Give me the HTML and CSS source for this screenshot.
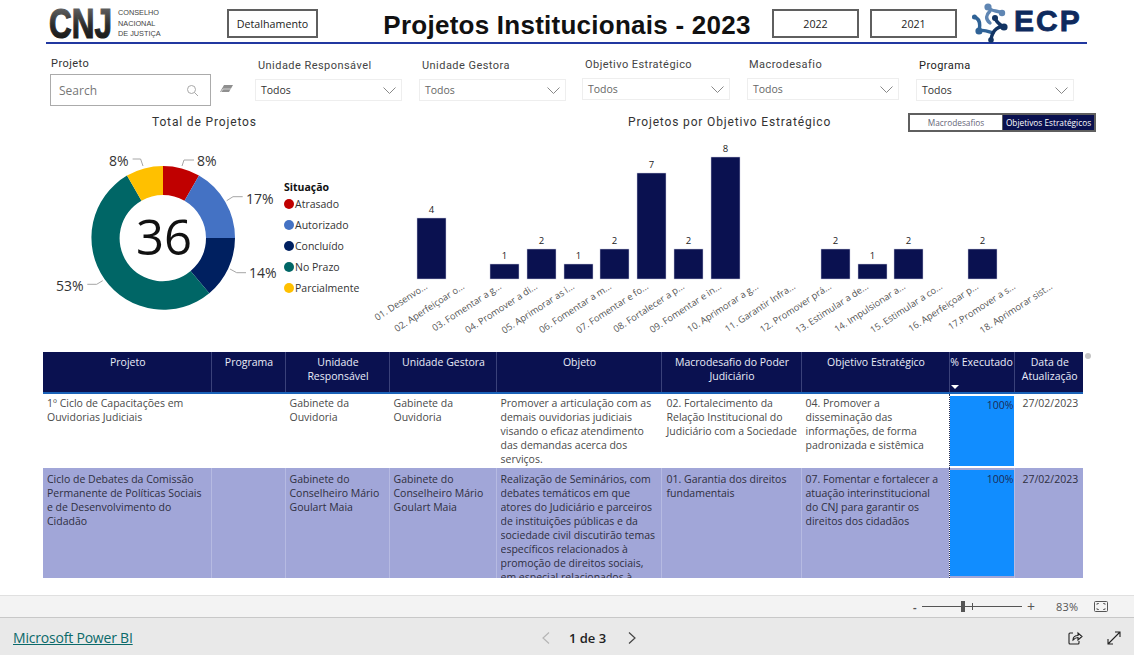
FILE: index.html
```html
<!DOCTYPE html>
<html lang="pt-BR">
<head>
<meta charset="utf-8">
<title>Projetos Institucionais - 2023</title>
<link rel="stylesheet" href="styles.css">
</head>
<body>
<main class="report">
  <header class="top">
    <div class="cnj">
      <svg class="cnj-mark" width="66" height="42" viewBox="0 -7 66 42">
        <defs><linearGradient id="cnjg" x1="0" y1="0" x2="0" y2="1"><stop offset="0" stop-color="#7a7a7a"/><stop offset="0.55" stop-color="#2a2a2a"/><stop offset="1" stop-color="#111"/></linearGradient></defs>
        <text transform="translate(1 31) scale(.75 1)" class="cnj-letters" fill="url(#cnjg)" stroke="url(#cnjg)">CNJ</text>
      </svg>
      <div class="cnj-name">CONSELHO<br>NACIONAL<br>DE JUSTIÇA</div>
    </div>
    <button class="btn btn-detail">Detalhamento</button>
    <h1 class="title">Projetos Institucionais - 2023</h1>
    <button class="btn btn-year">2022</button>
    <button class="btn btn-year">2021</button>
    <div class="ecp">
      <svg width="38" height="42" viewBox="0 0 38 42">
        <g fill="none" stroke-linecap="round">
          <path d="M16 5 C19 10 25 8 30 11 M18 9 C14 13 13 17 18 21" stroke="#5f86b3" stroke-width="3.4"/>
          <path d="M2 15 C6 16 9 20 7 29 M7 29 C11 27 15 29 21 31" stroke="#2f6296" stroke-width="3.4"/>
          <path d="M23 16 C25 21 28 23 32 25 M32 25 C27 24 21 27 19 37" stroke="#123463" stroke-width="3.4"/>
        </g>
        <circle cx="16" cy="5" r="3.6" fill="#5f86b3"/><circle cx="30" cy="11" r="3.2" fill="#5f86b3"/>
        <circle cx="2.500" cy="15" r="2.500" fill="#2f6296"/><circle cx="7" cy="29" r="3.6" fill="#2f6296"/>
        <circle cx="23" cy="16" r="3" fill="#123463"/><circle cx="32" cy="25" r="3.6" fill="#123463"/><circle cx="19" cy="38" r="2.800" fill="#123463"/>
      </svg>
      <span class="ecp-name">ECP</span>
    </div>
  </header>

  <section class="filters">
    <div class="filter filter-search">
      <label class="filter-label">Projeto</label>
      <div class="search">
        <span>Search</span>
        <svg width="13" height="13" viewBox="0 0 13 13"><circle cx="5.5" cy="5.5" r="4" fill="none" stroke="#a8a8a8"/><path d="M8.5 8.5 L12 12" stroke="#a8a8a8"/></svg>
      </div>
    </div>
    <svg class="eraser" width="13" height="9" viewBox="0 0 13 9"><path d="M4 0 H13 L9 7 H0 Z" fill="#8f8f8f"/><path d="M1 7 L3 4 H11" stroke="#fff" stroke-width=".6" fill="none"/></svg>
    <div class="filter f-resp">
      <label class="filter-label">Unidade Responsável</label>
      <div class="select"><span>Todos</span><svg width="13" height="7" viewBox="0 0 13 7"><path d="M.5 .5 L6.5 6.5 L12.5 .5" fill="none" stroke="#888"/></svg></div>
    </div>
    <div class="filter f-gest">
      <label class="filter-label">Unidade Gestora</label>
      <div class="select dim"><span>Todos</span><svg width="13" height="7" viewBox="0 0 13 7"><path d="M.5 .5 L6.5 6.5 L12.5 .5" fill="none" stroke="#888"/></svg></div>
    </div>
    <div class="filter f-obj">
      <label class="filter-label">Objetivo Estratégico</label>
      <div class="select dim"><span>Todos</span><svg width="13" height="7" viewBox="0 0 13 7"><path d="M.5 .5 L6.5 6.5 L12.5 .5" fill="none" stroke="#888"/></svg></div>
    </div>
    <div class="filter f-macro">
      <label class="filter-label">Macrodesafio</label>
      <div class="select dim"><span>Todos</span><svg width="13" height="7" viewBox="0 0 13 7"><path d="M.5 .5 L6.5 6.5 L12.5 .5" fill="none" stroke="#888"/></svg></div>
    </div>
    <div class="filter f-prog">
      <label class="filter-label label-dark">Programa</label>
      <div class="select"><span>Todos</span><svg width="13" height="7" viewBox="0 0 13 7"><path d="M.5 .5 L6.5 6.5 L12.5 .5" fill="none" stroke="#888"/></svg></div>
    </div>
  </section>

  <section class="charts">
    <div class="donut-panel">
      <h2 class="chart-title donut-title">Total de Projetos</h2>
      <div class="donut-body">
        <svg class="donut" width="240" height="196" viewBox="0 -6 240 196">
          <path d="M120 12 A72 72 0 0 1 156 21.6 L141.5 46.8 A43 43 0 0 0 120 41 Z" fill="#c00000"/>
          <path d="M156 21.6 A72 72 0 0 1 192 84 L163 84 A43 43 0 0 0 141.5 46.8 Z" fill="#4472c4"/>
          <path d="M192 84 A72 72 0 0 1 166.3 139.2 L147.6 116.9 A43 43 0 0 0 163 84 Z" fill="#002060"/>
          <path d="M166.3 139.2 A72 72 0 1 1 84 21.6 L98.5 46.8 A43 43 0 1 0 147.6 116.9 Z" fill="#006666"/>
          <path d="M84 21.6 A72 72 0 0 1 120 12 L120 41 A43 43 0 0 0 98.5 46.8 Z" fill="#ffc000"/>
          <g class="leader">
            <path d="M139 12 L141 6 H151"/><path d="M100 12 L97.600 5 H89.600"/>
            <path d="M183.700 46.700 L190 42.700 H199.700"/><path d="M187 115 L193.700 118.700 H203"/><path d="M59.700 126.700 L53.700 130.300 H44.300"/>
          </g>
          <g class="pct">
            <text x="154" y="12">8%</text><text x="66" y="12">8%</text>
            <text x="203" y="50">17%</text><text x="206" y="124">14%</text><text x="13" y="137">53%</text>
          </g>
          <text class="total" x="121" y="101" text-anchor="middle">36</text>
        </svg>
        <div class="legend">
          <div class="legend-title">Situação</div>
          <ul class="legend-list">
            <li><i class="dot c-red"></i>Atrasado</li>
            <li><i class="dot c-blue"></i>Autorizado</li>
            <li><i class="dot c-navy"></i>Concluído</li>
            <li><i class="dot c-teal"></i>No Prazo</li>
            <li><i class="dot c-gold"></i>Parcialmente</li>
          </ul>
        </div>
      </div>
    </div>
    <div class="bars-panel">
      <div class="bars-head">
        <h2 class="chart-title bars-title">Projetos por Objetivo Estratégico</h2>
        <div class="toggle"><span class="tg">Macrodesafios</span><span class="tg on">Objetivos Estratégicos</span></div>
      </div>
      <svg class="bars" width="740" height="210" viewBox="0 0 740 210">
        <g class="bar-rects">
          <rect x="47" y="79" width="29" height="61"/><rect x="120" y="125" width="29" height="15"/><rect x="157" y="110" width="29" height="30"/>
          <rect x="194" y="125" width="29" height="15"/><rect x="230" y="110" width="29" height="30"/><rect x="267" y="34" width="29" height="106"/>
          <rect x="304" y="110" width="29" height="30"/><rect x="341" y="18" width="29" height="122"/><rect x="451" y="110" width="29" height="30"/>
          <rect x="488" y="125" width="29" height="15"/><rect x="524" y="110" width="29" height="30"/><rect x="598" y="110" width="29" height="30"/>
        </g>
        <g class="bar-vals" text-anchor="middle">
          <text x="61.500" y="74">4</text><text x="134.500" y="120">1</text><text x="171.500" y="105">2</text><text x="208.500" y="120">1</text>
          <text x="244.500" y="105">2</text><text x="281.500" y="29">7</text><text x="318.500" y="105">2</text><text x="355.500" y="13">8</text>
          <text x="465.500" y="105">2</text><text x="502.500" y="120">1</text><text x="538.500" y="105">2</text><text x="612.500" y="105">2</text>
        </g>
        <g class="bar-labels" text-anchor="end">
          <text transform="translate(58 149) rotate(-33)">01. Desenvo...</text>
          <text transform="translate(95 149) rotate(-33)">02. Aperfeiçoar o...</text>
          <text transform="translate(132 149) rotate(-33)">03. Fomentar a g...</text>
          <text transform="translate(168 149) rotate(-33)">04. Promover a di...</text>
          <text transform="translate(205 149) rotate(-33)">05. Aprimorar as i...</text>
          <text transform="translate(242 149) rotate(-33)">06. Fomentar a m...</text>
          <text transform="translate(279 149) rotate(-33)">07. Fomentar e fo...</text>
          <text transform="translate(315 149) rotate(-33)">08. Fortalecer a p...</text>
          <text transform="translate(352 149) rotate(-33)">09. Fomentar e in...</text>
          <text transform="translate(389 149) rotate(-33)">10. Aprimorar a g...</text>
          <text transform="translate(426 149) rotate(-33)">11. Garantir Infra...</text>
          <text transform="translate(462 149) rotate(-33)">12. Promover prá...</text>
          <text transform="translate(499 149) rotate(-33)">13. Estimular a de...</text>
          <text transform="translate(536 149) rotate(-33)">14. Impulsionar a...</text>
          <text transform="translate(573 149) rotate(-33)">15. Estimular a co...</text>
          <text transform="translate(609 149) rotate(-33)">16. Aperfeiçoar p...</text>
          <text transform="translate(646 149) rotate(-33)">17.Promover a s...</text>
          <text transform="translate(683 149) rotate(-33)">18. Aprimorar sist...</text>
        </g>
      </svg>
    </div>
  </section>

  <section class="table-wrap">
    <i class="scroll-dot"></i>
    <table class="grid">
      <colgroup>
        <col class="c1"><col class="c2"><col class="c3"><col class="c4"><col class="c5"><col class="c6"><col class="c7"><col class="c8"><col class="c9">
      </colgroup>
      <thead>
        <tr>
          <th>Projeto</th><th>Programa</th><th>Unidade Responsável</th><th>Unidade Gestora</th><th>Objeto</th><th>Macrodesafio do Poder Judiciário</th><th>Objetivo Estratégico</th>
          <th class="th-sort">% Executado<i class="sort-arrow"></i></th><th>Data de Atualização</th>
        </tr>
      </thead>
      <tbody>
        <tr class="row-a">
          <td>1º Ciclo de Capacitações em Ouvidorias Judiciais</td><td></td><td>Gabinete da Ouvidoria</td><td>Gabinete da Ouvidoria</td>
          <td class="pad-obj">Promover a articulação com as demais ouvidorias judiciais visando o eficaz atendimento das demandas acerca dos serviços.</td>
          <td class="pad-tight">02. Fortalecimento da Relação Institucional do Judiciário com a Sociedade</td>
          <td class="pad-goal">04. Promover a disseminação das informações, de forma padronizada e sistêmica</td>
          <td class="td-pct"><div class="pct-bar bar-a">100%</div></td><td class="td-date">27/02/2023</td>
        </tr>
        <tr class="row-b">
          <td>Ciclo de Debates da Comissão Permanente de Políticas Sociais e de Desenvolvimento do Cidadão</td><td></td>
          <td>Gabinete do Conselheiro Mário Goulart Maia</td><td>Gabinete do Conselheiro Mário Goulart Maia</td>
          <td class="pad-obj"><div class="clip">Realização de Seminários, com debates temáticos em que atores do Judiciário e parceiros de instituições públicas e da sociedade civil discutirão temas específicos relacionados à promoção de direitos sociais, em especial relacionados à educação e cidadania.</div></td>
          <td class="pad-tight">01. Garantia dos direitos fundamentais</td>
          <td class="pad-goal">07. Fomentar e fortalecer a atuação interinstitucional do CNJ para garantir os direitos dos cidadãos</td>
          <td class="td-pct"><div class="pct-bar bar-b">100%</div></td><td class="td-date">27/02/2023</td>
        </tr>
      </tbody>
    </table>
  </section>
</main>

<div class="zoombar">
  <span class="z-minus">-</span>
  <div class="slider"><i class="tick"></i><i class="thumb"></i></div>
  <span class="z-plus">+</span>
  <span class="z-val">83%</span>
  <svg class="fit" width="14" height="11" viewBox="0 0 14 11" fill="none" stroke="#555"><rect x=".5" y=".5" width="13" height="10" rx="1"/><path d="M3 4 V2.500 H5 M9 2.500 H11 V4 M3 7 V8.500 H5 M9 8.500 H11 V7" stroke-width=".8"/></svg>
</div>
<footer class="footer">
  <a class="pbi" href="#">Microsoft Power BI</a>
  <nav class="pager">
    <svg width="8" height="12" viewBox="0 0 8 12"><path d="M7 .5 L1 6 L7 11.500" fill="none" stroke="#b5b5b5" stroke-width="1.200"/></svg>
    <span>1 de 3</span>
    <svg width="8" height="12" viewBox="0 0 8 12"><path d="M1 .5 L7 6 L1 11.500" fill="none" stroke="#444" stroke-width="1.200"/></svg>
  </nav>
  <div class="foot-icons">
    <svg width="15" height="14" viewBox="0 0 15 14" fill="none" stroke="#222" stroke-width="1.100"><path d="M5 2 H2 Q1 2 1 3 V12 Q1 13 2 13 H10 Q11 13 11 12 V10"/><path d="M5 9 C5 6 7 4.500 10 4.500 V2 L14 5.500 L10 9 V6.500 C8 6.500 6.500 7.500 5 9 Z"/></svg>
    <svg width="14" height="14" viewBox="0 0 14 14" fill="none" stroke="#222" stroke-width="1.100"><path d="M1 13 L13 1 M8 1 H13 V6 M1 8 V13 H6"/></svg>
  </div>
</footer>
</body>
</html>
```
FILE: styles.css
```css
* { box-sizing: border-box; }
html, body { margin: 0; padding: 0; }
body {
  width: 1134px; height: 655px; overflow: hidden; background: #fff;
  font-family: "Open Sans", "Liberation Sans", sans-serif; color: #333;
  display: flex; flex-direction: column;
}
.report { height: 595px; overflow: hidden; }

/* header */
.top {
  height: 44px; margin: 0 47px 0 46px; padding-left: 2px;
  border-bottom: 2px solid #2138a0; display: flex; align-items: flex-start;
}
.cnj { display: flex; align-items: flex-start; width: 179px; }
.cnj-mark { display: block; }
.cnj-letters { font: bold 42px "Liberation Sans", sans-serif; stroke-width: 1.2; }
.cnj-name { font: 7.300px/10.500px "Liberation Sans", sans-serif; color: #444; margin-left: 4px; padding-top: 8px; }
.btn {
  margin-top: 9px; height: 29px; padding: 0; background: #fff; border: 2px solid #5f5f5f;
  font: 10.700px "Open Sans", sans-serif; color: #222;
}
.btn-detail { width: 91px; }
.btn-year { width: 87px; margin-right: 11px; }
.title {
  width: 454px; margin: 8px 0 0; padding-left: 44px; text-align: center; white-space: nowrap;
  font: bold 26px/34px "Liberation Sans", sans-serif; letter-spacing: .25px; color: #111;
}
.ecp { display: flex; align-items: flex-start; margin-left: 4px; padding-top: 2px; }
.ecp-name { font: bold 30px/38px "Liberation Sans", sans-serif; -webkit-text-stroke: .8px #0e2a5e; color: #0e2a5e; margin-left: 4px; letter-spacing: 2px; }

/* filters */
.filters { height: 64px; padding-left: 50px; display: flex; align-items: flex-start; }
.filter-label { display: block; font: 11px/14px Roboto, sans-serif; letter-spacing: .45px; color: #444; }
.label-dark { color: #222; }
.search {
  height: 32px; border: 1px solid #ababab; padding: 0 11px 0 8px;
  display: flex; align-items: center; justify-content: space-between; font-size: 12px; color: #777;
}
.eraser { margin: 41px 0 0 9px; }
.filter { padding-top: 15px; }
.filter .filter-label { padding-left: 3px; margin-bottom: 6px; }
.select {
  height: 22px; border: 1px solid #eeeeee; padding: 0 3px 0 5px;
  display: flex; align-items: center; justify-content: space-between; font-size: 10.500px; color: #333;
}
.select.dim { color: #666; }
.select svg { margin-right: 2px; }
.filter.filter-search { width: 161px; padding-top: 13px; }
.filter-search .filter-label { padding-left: 1px; margin-bottom: 3px; color: #333; }
.f-resp { width: 147px; margin-left: 22px; }
.f-gest { width: 147px; margin-left: 17px; }
.filter.f-obj { width: 148px; margin-left: 16px; padding-top: 14px; }
.filter.f-macro { width: 152px; margin-left: 17px; padding-top: 14px; }
.f-macro .filter-label { margin-left: -1px; }
.f-prog { width: 158px; margin-left: 17px; }
.filter.f-prog .filter-label { margin-bottom: 6px; }

/* charts */
.charts { height: 244px; display: flex; }
.chart-title { margin: 0; font: 400 12px/16px Roboto, sans-serif; letter-spacing: .85px; color: #333; }
.donut-panel { width: 362px; padding-top: 6px; }
.donut-title { padding-left: 152px; }
.donut-body { display: flex; padding-left: 43px; margin-top: 10px; position: relative; }
.donut { display: block; margin-top: 8px; }
.leader path { fill: none; stroke: #a6a6a6; }
.pct text { font-size: 14px; fill: #333; }
.total { font-size: 49px; font-weight: 400; fill: #111; font-family: "Open Sans", sans-serif; }
.legend { position: absolute; left: 284px; top: 40px; }
.legend-title { font: bold 10.500px/14px "Open Sans", sans-serif; color: #111; }
.legend-list { list-style: none; margin: -1px 0 0; padding: 0; }
.legend-list li { display: flex; align-items: center; height: 21px; font-size: 10.500px; color: #333; }
.dot { width: 10px; height: 10px; border-radius: 50%; margin-right: 1px; }
.c-red { background: #c00000; } .c-blue { background: #4472c4; } .c-navy { background: #002060; }
.c-teal { background: #006666; } .c-gold { background: #ffc000; }
.bars-panel { width: 772px; }
.bars-head { display: flex; align-items: flex-start; height: 27px; padding-top: 5px; }
.bars-title { margin-left: 266px; width: 280px; padding-top: 1px; }
.toggle { display: flex; border: 2px solid #5f5f5f; height: 19px; width: 188px; background: #5f5f5f; gap: 1px; }
.tg { flex: 1 1 auto; background: #fff; font: 8.300px/15px "Open Sans", sans-serif; color: #667; text-align: center; }
.tg.on { background: #0a1150; color: #fff; flex: 0 0 91px; white-space: nowrap; overflow: hidden; }
.bars { display: block; margin: 4px 0 0 8px; }
.bar-rects rect { fill: #0a1150; stroke: #c9cbe0; stroke-width: .5; }
.bar-vals text { font-size: 9.500px; fill: #222; }
.bar-labels text { font-size: 9.300px; fill: #555; }

/* table */
.table-wrap { margin: 0 0 0 43px; width: 1040px; height: 227px; overflow: visible; position: relative; }
.scroll-dot { position: absolute; left: 1042px; top: 1px; width: 6px; height: 6px; border-radius: 50%; background: #c4c4c4; }
.grid { width: 1040px; table-layout: fixed; border-collapse: collapse; font-size: 10.500px; line-height: 14px; }
.c1 { width: 168px; } .c2 { width: 74px; } .c3 { width: 104px; } .c4 { width: 107px; } .c5 { width: 165px; }
.c6 { width: 140px; } .c7 { width: 148px; } .c8 { width: 65px; } .c9 { width: 69px; }
.grid th {
  background: #0a1150; color: #e9ecf8; font-weight: 400; height: 41px; padding: 3px 2px 0 4px;
  vertical-align: top; text-align: center; border-left: 1px solid #3a4179; border-bottom: 2px solid #1a62b8; position: relative;
}
.grid th:first-child { border-left: 0; }
.grid .th-sort { white-space: nowrap; padding: 3px 0 0; }
.sort-arrow {
  position: absolute; left: 1px; bottom: 3px; width: 0; height: 0;
  border-left: 4px solid transparent; border-right: 4px solid transparent; border-top: 4px solid #fff;
}
.grid td { vertical-align: top; padding: 4px 4px 0; color: #4a4a4a; overflow: hidden; border-left: 1px solid transparent; }
.grid td:first-child { border-left: 0; }
.grid .row-a td { height: 75px; background: #fff; padding-top: 2px; }
.grid .row-b td { height: 110px; background: #a1a6d8; color: #2f2f3f; border-left-color: #b6bae2; }
.grid td.pad-obj { padding-left: 4px; padding-right: 2px; }
.grid td.pad-tight { padding-left: 5px; padding-right: 1px; }
.grid td.pad-goal { padding-left: 4px; padding-right: 6px; }
.clip { height: 106px; overflow: hidden; }
.grid .row-a td.td-pct, .grid .row-b td.td-pct { padding: 2px 0 0 0; border-left: 1px dotted #2a2f55; }
.pct-bar { background: #118dff; text-align: right; padding: 2px 0 0; color: #1c2a55; }
.bar-a { height: 70px; }
.bar-b { height: 106px; }
.grid td.td-date { padding-left: 8px; padding-right: 0; white-space: nowrap; }

/* bottom */
.zoombar {
  height: 23px; background: #f3f3f3; border-top: 1px solid #e0e0e0; border-bottom: 1px solid #c8c8c8;
  display: flex; align-items: center; padding-left: 913px; font-size: 11px; color: #555;
}
.z-minus { width: 9px; font-weight: 700; line-height: 1; }
.slider { width: 100px; height: 1px; background: #555; position: relative; }
.thumb { position: absolute; left: 39px; top: -5px; width: 4px; height: 11px; background: #555; }
.tick { position: absolute; left: 50px; top: -3px; width: 1px; height: 7px; background: #555; }
.z-plus { margin-left: 5px; font-size: 14px; line-height: 1; }
.z-val { margin-left: 21px; width: 38px; letter-spacing: .2px; }
.footer {
  height: 37px; background: #e9e9e9; position: relative;
  display: flex; align-items: center; justify-content: space-between; padding: 2px 13px 0;
}
.pbi { font: 14px "Open Sans", sans-serif; color: #0b6a6a; text-decoration: underline; letter-spacing: -.2px; }
.pager {
  position: absolute; left: 542px; top: 1px; height: 37px; width: 94px;
  display: flex; align-items: center; justify-content: space-between; font-size: 13px; font-weight: 600; color: #222;
}
.pager span { margin-right: 3px; }
.foot-icons { display: flex; align-items: center; gap: 24px; }
```
